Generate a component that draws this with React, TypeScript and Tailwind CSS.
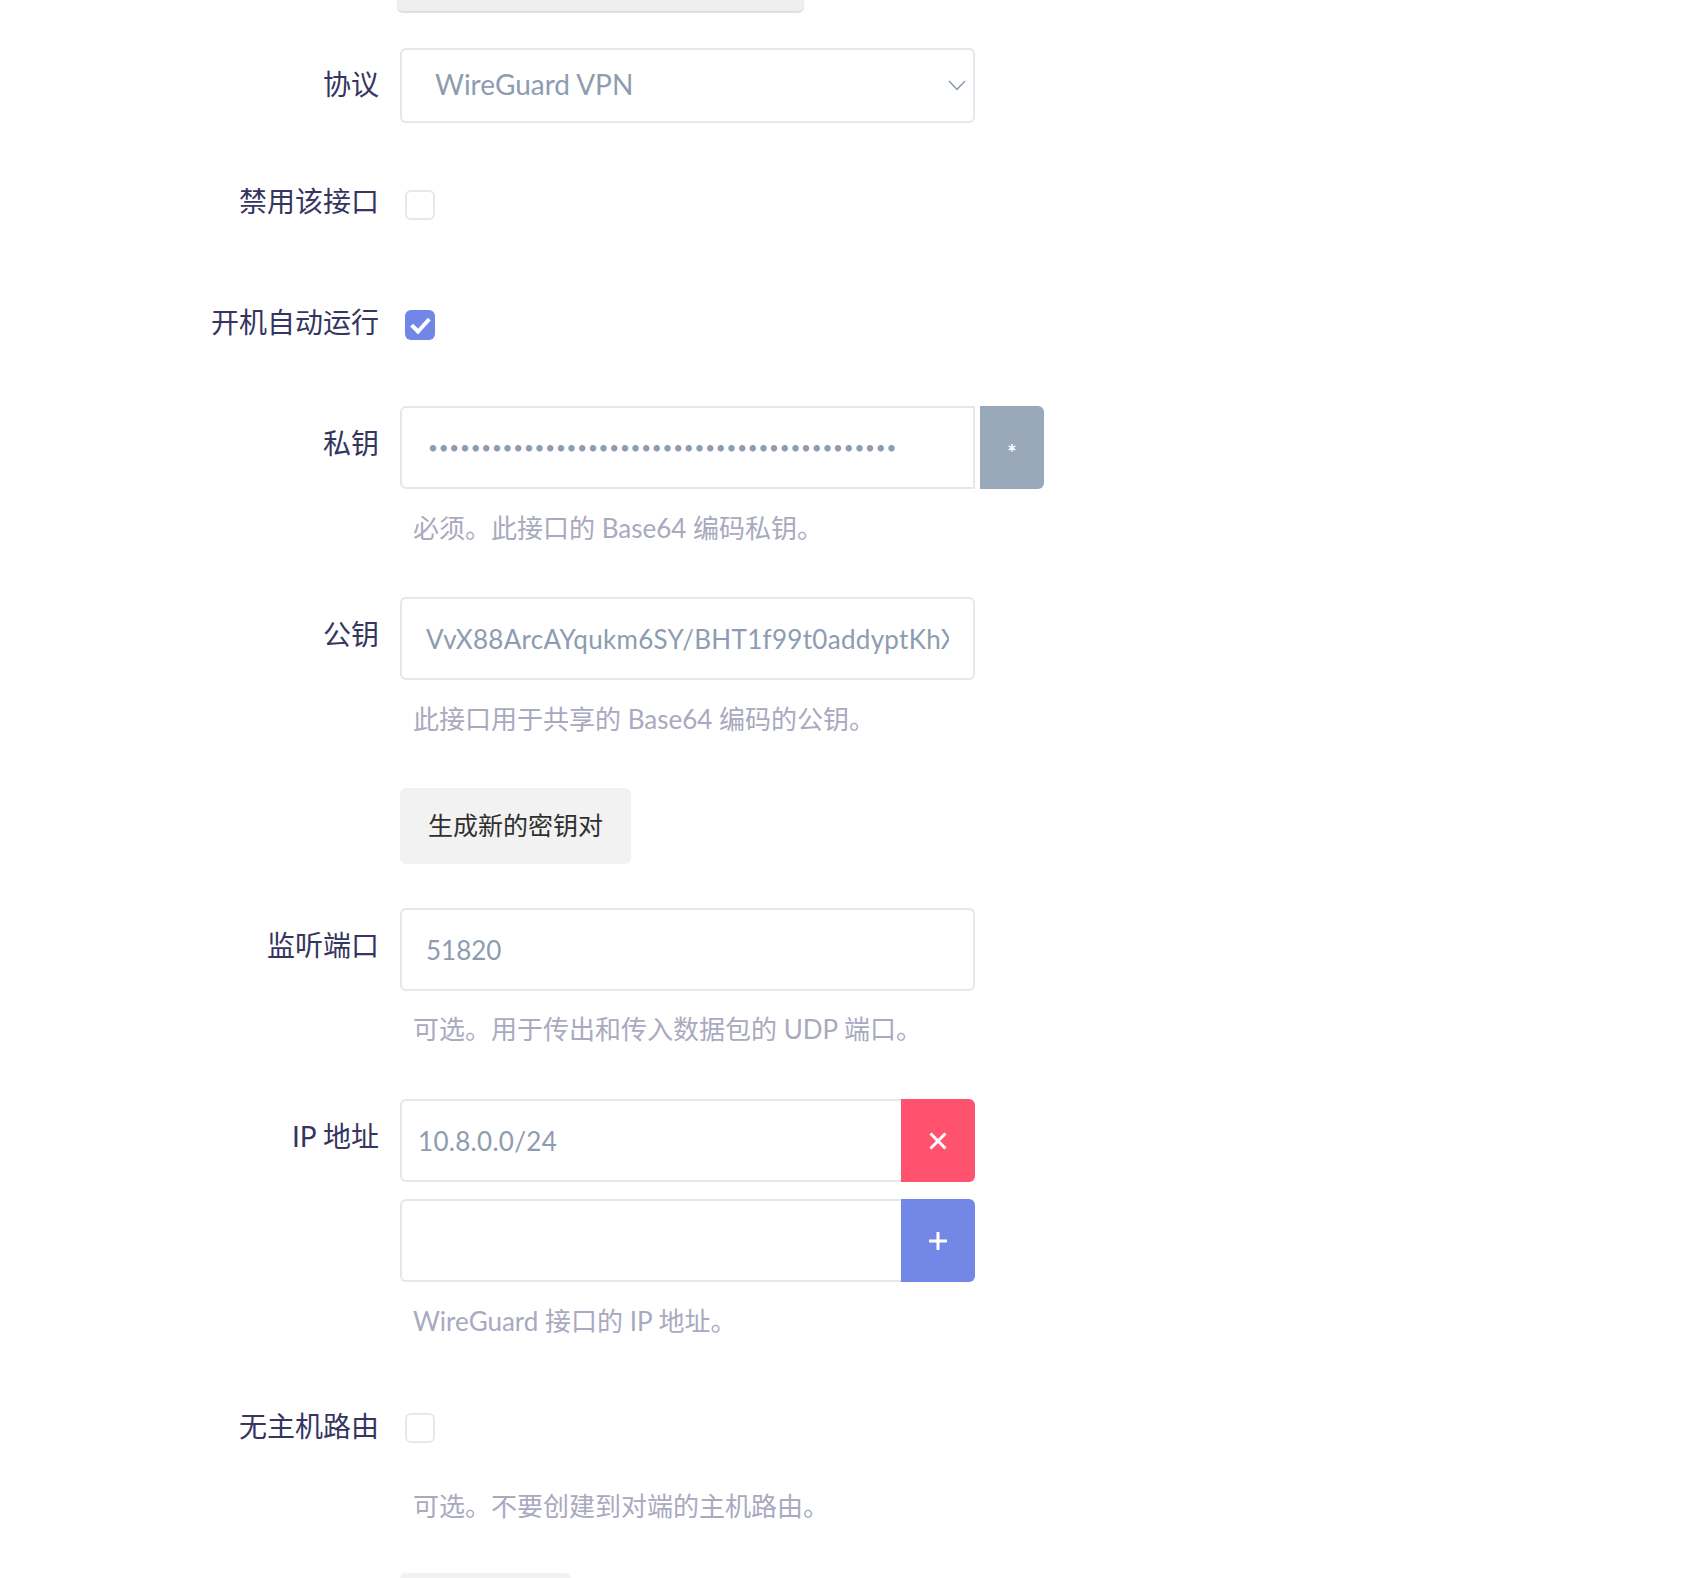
import React from 'react'

const font = "font-['Lato','Noto_Sans_CJK_SC',sans-serif]"

const Label = ({ children, shift = 'pb-[10px]' }: { children?: React.ReactNode; shift?: string }) => (
  <div className={`w-[379px] shrink-0 text-right text-[28px] leading-[28px] text-[#35355f] ${shift}`}>{children}</div>
)

const Help = ({ children, mt }: { children: React.ReactNode; mt: string }) => (
  <div className={`flex ${mt}`}>
    <div className="w-[379px] shrink-0" />
    <div className="ml-[21px] pl-[13px] text-[26px] leading-[26px] text-[#a9a9c0] whitespace-nowrap">{children}</div>
  </div>
)

const Checkbox = ({ checked }: { checked?: boolean }) =>
  checked ? (
    <div className="ml-[5px] flex h-[30px] w-[30px] items-center justify-center rounded-[6px] bg-[#7186e6]">
      <svg width="30" height="30" viewBox="0 0 30 30">
        <path d="M8 16.5 L13 21.5 L23 10.5" fill="none" stroke="white" strokeWidth="4" strokeLinecap="square" />
      </svg>
    </div>
  ) : (
    <div className="ml-[5px] h-[30px] w-[30px] rounded-[6px] border-2 border-[#e3e7ee] bg-white" />
  )

const inputBase = 'h-[83px] border-2 border-[#e4e7eb] bg-white text-[26px] text-[#8d9cb0] outline-none'

export default function App() {
  return (
    <div className={`min-h-screen w-full bg-white ${font}`}>
      <div className="flex">
        <div className="w-[379px] shrink-0" />
        <div className="ml-[18px] h-[11px] w-[407px] rounded-b-[6px] bg-[#efefef] shadow-[0_2px_1px_rgba(0,0,0,0.13)]" />
      </div>

      {/* 协议 */}
      <div className="mt-[37px] flex h-[75px] items-center">
        <Label shift="pb-[3px]">协议</Label>
        <div className="ml-[21px] flex h-[75px] w-[575px] items-center justify-between rounded-[6px] border-2 border-[#e4e7eb] pl-[33px] pr-[7px]">
          <span className="pb-[4px] text-[28px] text-[#8d9cb0]">WireGuard VPN</span>
          <svg width="18" height="11" viewBox="0 0 18 11">
            <polyline points="1,1 9,9.5 17,1" fill="none" stroke="#8898aa" strokeWidth="1.5" />
          </svg>
        </div>
      </div>

      {/* 禁用该接口 */}
      <div className="mt-[67px] flex h-[30px] items-center">
        <Label shift="pb-[8px]">禁用该接口</Label>
        <div className="ml-[21px]"><Checkbox /></div>
      </div>

      {/* 开机自动运行 */}
      <div className="mt-[90px] flex h-[30px] items-center">
        <Label shift="pb-[6px]">开机自动运行</Label>
        <div className="ml-[21px]"><Checkbox checked /></div>
      </div>

      {/* 私钥 */}
      <div className="mt-[66px] flex h-[83px] items-center">
        <Label>私钥</Label>
        <div className="ml-[21px] flex gap-[5px]">
          <input
            type="password"
            readOnly
            defaultValue="SFeY3nM2kqPz0tLhR8vWxA6bCdEfGhIjKlMnOpQrStU="
            className="h-[83px] w-[575px] rounded-l-[6px] border-2 border-[#e4e7eb] bg-white pl-[26px] pr-[24px] text-[17px] tracking-[0.8px] text-[#8d9cb0] outline-none"
          />
          <div className="flex h-[83px] w-[64px] items-center justify-center rounded-r-[6px] bg-[#98a8b9] pt-[10px] text-[22px] font-bold leading-none text-white">
            *
          </div>
        </div>
      </div>
      <Help mt="mt-[26px]">必须。此接口的 Base64 编码私钥。</Help>

      {/* 公钥 */}
      <div className="mt-[56px] flex h-[83px] items-center">
        <Label>公钥</Label>
        <input
          readOnly
          defaultValue="VvX88ArcAYqukm6SY/BHT1f99t0addyptKhXtC4Qy6Qs="
          className={`${inputBase} ml-[21px] w-[575px] rounded-[6px] pl-[24px] pr-[24px] tracking-[0.3px]`}
        />
      </div>
      <Help mt="mt-[26px]">此接口用于共享的 Base64 编码的公钥。</Help>

      {/* 生成新的密钥对 */}
      <div className="mt-[56px] flex">
        <div className="w-[379px] shrink-0" />
        <button className="ml-[21px] flex h-[76px] w-[231px] items-center justify-center rounded-[6px] bg-[#f2f2f2] text-[25px] text-[#2f2f2f]">
          生成新的密钥对
        </button>
      </div>

      {/* 监听端口 */}
      <div className="mt-[44px] flex h-[83px] items-center">
        <Label>监听端口</Label>
        <input
          readOnly
          defaultValue="51820"
          className={`${inputBase} ml-[21px] w-[575px] rounded-[6px] pl-[24px] pr-[24px]`}
        />
      </div>
      <Help mt="mt-[25px]">可选。用于传出和传入数据包的 UDP 端口。</Help>

      {/* IP 地址 */}
      <div className="mt-[57px] flex h-[83px] items-center">
        <Label>IP 地址</Label>
        <div className="ml-[21px] flex w-[575px]">
          <input
            readOnly
            defaultValue="10.8.0.0/24"
            className={`${inputBase} min-w-0 flex-1 rounded-l-[6px] border-r-0 pl-[16px] tracking-[0.3px]`}
          />
          <div className="flex h-[83px] w-[74px] items-center justify-center rounded-r-[6px] bg-[#fe526f]">
            <svg width="20" height="20" viewBox="0 0 20 20">
              <path d="M2.5 2.5 L17.5 17.5 M17.5 2.5 L2.5 17.5" stroke="white" strokeWidth="3" />
            </svg>
          </div>
        </div>
      </div>
      <div className="mt-[17px] flex h-[83px] items-center">
        <Label />
        <div className="ml-[21px] flex w-[575px]">
          <input readOnly defaultValue="" className={`${inputBase} min-w-0 flex-1 rounded-l-[6px] border-r-0 pl-[16px]`} />
          <div className="flex h-[83px] w-[74px] items-center justify-center rounded-r-[6px] bg-[#7388e6]">
            <svg width="20" height="20" viewBox="0 0 20 20">
              <path d="M10 1 V19 M1 10 H19" stroke="white" strokeWidth="3" />
            </svg>
          </div>
        </div>
      </div>
      <Help mt="mt-[26px]">WireGuard 接口的 IP 地址。</Help>

      {/* 无主机路由 */}
      <div className="mt-[79px] flex h-[30px] items-center">
        <Label shift="pb-[5px]">无主机路由</Label>
        <div className="ml-[21px]"><Checkbox /></div>
      </div>
      <Help mt="mt-[50px]">可选。不要创建到对端的主机路由。</Help>

      <div className="mt-[54px] flex">
        <div className="w-[379px] shrink-0" />
        <div className="ml-[21px] h-[70px] w-[171px] rounded-t-[6px] bg-[#f2f2f2]" />
      </div>
    </div>
  )
}
